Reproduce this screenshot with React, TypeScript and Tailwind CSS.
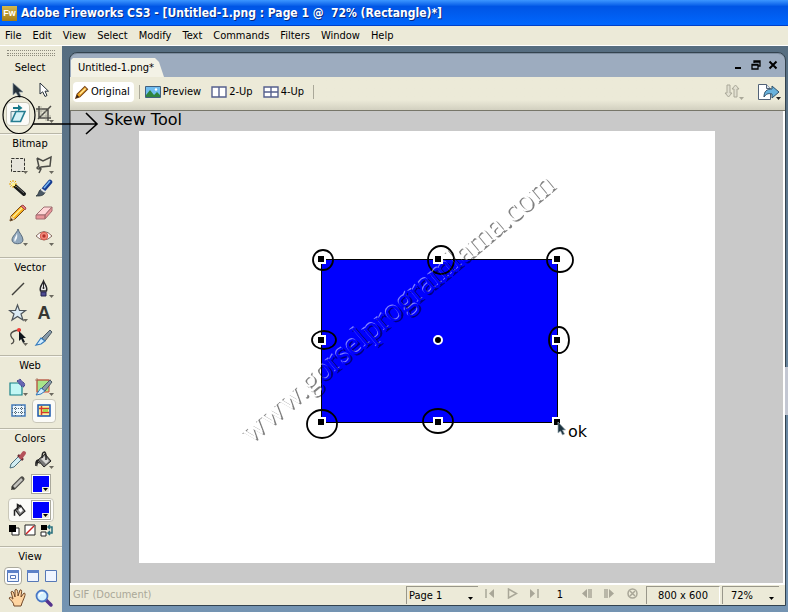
import type { ReactNode } from "react";

const menus = ["File", "Edit", "View", "Select", "Modify", "Text", "Commands", "Filters", "Window", "Help"];

function Icon({ children, size = 20 }: { children: ReactNode; size?: number }) {
  return (
    <svg width={size} height={size} viewBox={`0 0 ${size} ${size}`} fill="none" aria-hidden="true">
      {children}
    </svg>
  );
}

const flyout = <path d="M15 16h5l-2.500 3z" fill="#6b695f" />;

const icons = {
  pointer: (
    <Icon>
      <path d="M5 3v12l3-2.500 3 5 2-1-2-4.500h4z" fill="#25313b" stroke="#8795a0" strokeWidth=".7" />
    </Icon>
  ),
  subselect: (
    <Icon>
      <path d="M6 3v11l2.700-2.200 2.300 4.700 2-1-2-4.300h3.500z" fill="#fff" stroke="#26303a" />
    </Icon>
  ),
  skew: (
    <Icon>
      <path d="M3 7.500h9v10H3z" fill="#e9f3f4" stroke="#6d8993" />
      <path d="M8 7.500h9l-4.500 10H3.500z" fill="#d5f2f7" stroke="#257d91" strokeWidth="1.600" />
      <path d="M5 3h5V.5L14.500 4 10 7V5H5z" fill="#17798a" />
    </Icon>
  ),
  crop: (
    <Icon>
      <path d="M5 2v12h12M2 5h12v12M4 15L17 2" stroke="#4e4d48" strokeWidth="1.500" />
      <path d="M7 2v10h10M2 7h10v10" stroke="#8f8d82" strokeWidth=".6" />
      {flyout}
    </Icon>
  ),
  marquee: (
    <Icon>
      <path d="M3.500 3.500h13v13h-13z" fill="#e7e5db" stroke="#34342f" strokeDasharray="3 1.300" />
      {flyout}
    </Icon>
  ),
  lasso: (
    <Icon>
      <path d="M3 3l6 3 8-4-1 9-9 1-2 2c-3 0-2-3 0-2l2 2-2 4M3 3l2 9" stroke="#4b4b46" strokeWidth="1.500" />
      {flyout}
    </Icon>
  ),
  wand: (
    <Icon>
      <path d="M7 7l9 8" stroke="#17191a" strokeWidth="4" strokeLinecap="round" />
      <path d="M8 7l8 7" stroke="#777" />
      <path d="M5 1v8M1 5h8M2 2l6 6M8 2L2 8" stroke="#e8a000" strokeDasharray="2 1" />
      <path d="M4 4h3v3H4z" fill="#fff38b" />
    </Icon>
  ),
  brush: (
    <Icon>
      <path d="M10 10l6-7" stroke="#173c91" strokeWidth="4.500" strokeLinecap="round" />
      <path d="M10 9l6-7" stroke="#74b6f3" strokeWidth="1.500" />
      <path d="M7 10l4 3c-1 4-5 4-9 4 3-1 2-5 5-7z" fill="#4b5966" stroke="#252e35" strokeWidth=".8" />
      <path d="M7 10l4 3" stroke="#e3e6e6" strokeWidth="2" />
    </Icon>
  ),
  pencil: (
    <Icon>
      <path d="M3 13L13 3l4 3L7 16l-5 2z" fill="#f6b01c" stroke="#784818" />
      <path d="M13 3l2-1 3 3-1 2z" fill="#e57b7c" stroke="#a34848" />
      <path d="M5 14l9-9" stroke="#fff09a" strokeWidth="1.500" />
      <path d="M3 13l4 3-5 2z" fill="#eed1a0" />
      <path d="M3 15l2 2-3 1z" fill="#352516" />
    </Icon>
  ),
  eraser: (
    <Icon>
      <path d="M2 12l8-8h8l-7 8z" fill="#ffd6d7" stroke="#9d7072" />
      <path d="M2 12h9v4H2zM11 12l7-8v4l-7 8z" fill="#e99599" stroke="#a46c70" />
    </Icon>
  ),
  drop: (
    <Icon>
      <path d="M10 2c1 4 5 7 5 11 0 5-11 5-11 0 0-4 5-7 6-11z" fill="#91a8bd" stroke="#596b7d" />
      <path d="M9 6c-1 4-4 6-2 9 1-3 3-3 2-9z" fill="#f4f8fb" />
      {flyout}
    </Icon>
  ),
  eye: (
    <Icon>
      <path d="M2 9q8-9 16 0-8 8-16 0z" fill="#fff" stroke="#876c60" />
      <circle cx="10" cy="9" r="3.800" fill="#f08a7c" stroke="#d8584a" />
      <circle cx="10" cy="9" r="1.700" fill="#b3302a" />
      {flyout}
    </Icon>
  ),
  line: (
    <Icon>
      <path d="M4 16L16 4" stroke="#41403c" strokeWidth="1.500" />
    </Icon>
  ),
  pen: (
    <Icon>
      <path d="M9.500 2C8 6 5 8 6.500 12h6c1.500-4-1.500-6-3-10z" fill="#eee" stroke="#24242a" strokeWidth="1.400" />
      <path d="M9.500 3v6" stroke="#24242a" />
      <circle cx="9.500" cy="9" r="1" fill="#222" />
      <path d="M7 13h5v4H7z" fill="#4e4b92" stroke="#242450" />
      {flyout}
    </Icon>
  ),
  star: (
    <Icon>
      <path d="M9.500 2l2 5.500h6L13 11l2 6-5.500-3.500L4 17l2-6-4.500-3.500h6z" fill="#dcebf4" stroke="#4d545a" strokeWidth="1.200" />
      {flyout}
    </Icon>
  ),
  freeform: (
    <Icon>
      <path d="M3 17c3-1 4-4 1-6-4-5 2-8 9-8" stroke="#4b4a44" strokeWidth="1.300" />
      <circle cx="11" cy="3" r="2" fill="#f33b34" />
      <path d="M11 4v10l2.200-2 1.800 4 2-1-2-4h3z" fill="#10161c" />
      {flyout}
    </Icon>
  ),
  knife: (
    <Icon>
      <path d="M8 11l8-8 2 2-7 9z" fill="#879aa8" stroke="#4c5963" />
      <path d="M7 11l4 3-4 3-5 1z" fill="#d2edff" stroke="#347bbd" strokeWidth="1.200" />
    </Icon>
  ),
  hotspot: (
    <Icon>
      <path d="M2 6h12v12H2z" fill="#c2f7f5" stroke="#168288" strokeWidth="1.200" />
      <path d="M9 4l3-2 5 5-1 3-3-1z" fill="#6866b2" stroke="#292c76" strokeDasharray="1 1" />
      {flyout}
    </Icon>
  ),
  slice: (
    <Icon>
      <path d="M3 3h12v12H3z" fill="#a8e58a" stroke="#d84736" />
      <path d="M3 1v16M1 3h16" stroke="#995e49" strokeWidth=".7" />
      <path d="M8 11l8-8 2 2-7 9z" fill="#879aa8" stroke="#4c5963" />
      <path d="M7 11l4 3-4 3-5 1z" fill="#d2edff" stroke="#347bbd" />
      {flyout}
    </Icon>
  ),
  hide: (
    <Icon>
      <path d="M4 4h13v11H4z" fill="#eef8ff" stroke="#447bb9" strokeWidth="1.500" />
      <path d="M4 7.500h13M4 11.500h13M7.500 4v11M13.500 4v11" stroke="#4e6575" strokeDasharray="1 1" />
    </Icon>
  ),
  show: (
    <Icon>
      <path d="M4 4h12v11H4z" fill="#fff3a0" stroke="#1957ad" strokeWidth="1.500" />
      <path d="M7.500 5v9M5 7.500h10M8 11.500h7" stroke="#d3392b" strokeWidth="1.500" />
      <path d="M9 8h5v3H9z" fill="#a4d84a" />
    </Icon>
  ),
  dropper: (
    <Icon>
      <path d="M3 14L11 6l3 3-8 8-4 1z" fill="#d2edf2" stroke="#4a6e7c" />
      <path d="M10 5l5 5" stroke="#652b32" strokeWidth="2.500" />
      <path d="M13 7l3-4" stroke="#b45159" strokeWidth="4" strokeLinecap="round" />
    </Icon>
  ),
  bucket: (
    <Icon>
      <path d="M4 10l7-6 6 7-7 6z" fill="#777" stroke="#22211f" />
      <path d="M7 9l4-3 4 5-3 3z" fill="#d9d9d5" />
      <path d="M4 10c-3 1-2 4-2 6M8 8c0-8 4-7 4-2v4" stroke="#222" strokeWidth="1.500" />
      <path d="M3 10l4 4-3-1-1 4-1-5z" fill="#222" />
      {flyout}
    </Icon>
  ),
  stroke: (
    <Icon>
      <path d="M6 13l8-8" stroke="#4d4c48" strokeWidth="5" strokeLinecap="round" />
      <path d="M6 13l8-8" stroke="#c4c3bd" strokeWidth="2.500" />
      <path d="M3 16l1-4 3 3z" fill="#353430" />
    </Icon>
  ),
  hand: (
    <Icon>
      <path d="M6 18c0-4-4-6-5-8 2-2 3 1 4 1L3 4c2-2 3 1 4 5V2c2-2 3 1 3 6l2-6c3-1 1 4 1 7l3-4c3 0-1 7-2 10l-1 3z" fill="#ffd5a1" stroke="#714626" />
    </Icon>
  ),
  magnifier: (
    <Icon>
      <path d="M12 12l5 5" stroke="#55338d" strokeWidth="3.500" strokeLinecap="round" />
      <circle cx="8" cy="8" r="5.500" fill="#d6f2ff" stroke="#4978c6" strokeWidth="1.800" />
      <path d="M5 8q1-4 4-3" stroke="#fff" strokeWidth="1.500" />
    </Icon>
  ),
};

function Tool({ label, active = false, children }: { label: string; active?: boolean; children: ReactNode }) {
  return (
    <button
      type="button"
      aria-label={label}
      className={
        active
          ? "flex h-6 w-6 items-center justify-center rounded-sm border border-[#c9c7b9] bg-[#fbfbf8]"
          : "flex h-6 w-6 items-center justify-center"
      }
    >
      {children}
    </button>
  );
}

function Section({ title, children }: { title: string; children: ReactNode }) {
  return (
    <section className="border-t border-[#b9b7a8] shadow-[inset_0_1px_0_#f8f7ef]">
      <h2 className="flex h-[19px] items-center justify-center pr-0.5">{title}</h2>
      <div className="px-1.5">{children}</div>
    </section>
  );
}

function Swatch({ label }: { label: string }) {
  return (
    <button type="button" aria-label={label} className="flex h-[18px] w-[18px] items-end justify-end border border-white bg-[#0000fe] shadow-[0_0_0_1px_#aaa99c]">
      <svg width="7" height="5" aria-hidden="true">
        <path d="M0 0h7v5H0z" fill="#ecead8" />
        <path d="M1 1h5L3.500 4z" fill="#000" />
      </svg>
    </button>
  );
}

function ViewMode({ kind }: { kind: number }) {
  return (
    <svg width="14" height="14" viewBox="0 0 14 14" fill="none" aria-hidden="true">
      <path d="M1.500 1.500h11v11h-11z" fill="#f0f5ff" stroke="#5678b6" />
      {kind < 2 && <path d="M1 1h12v3H1z" fill="#5e82c8" />}
      {kind === 0 && <path d="M4.500 6.500h5v3h-5z" fill="#fff" stroke="#5576b8" />}
    </svg>
  );
}

function Toolbox() {
  return (
    <aside className="w-[62px] shrink-0 bg-[#ecead8]">
      <div className="mx-[7px] mt-1 flex h-1.5 flex-col justify-between">
        <div className="border-t border-dotted border-[#8d8b7e]" />
        <div className="border-t border-dotted border-[#8d8b7e]" />
        <div className="border-t border-dotted border-[#8d8b7e]" />
      </div>
      <h2 className="flex h-5 items-center justify-center pt-1 pr-0.5">Select</h2>
      <div className="grid grid-cols-[26px_26px] px-1.5 pt-0.5 pb-[7px]">
        <Tool label="Pointer">{icons.pointer}</Tool>
        <Tool label="Subselection">{icons.subselect}</Tool>
        <Tool label="Skew" active>{icons.skew}</Tool>
        <Tool label="Crop">{icons.crop}</Tool>
      </div>
      <Section title="Bitmap">
        <div className="grid grid-cols-[26px_26px] pb-2">
          <Tool label="Marquee">{icons.marquee}</Tool>
          <Tool label="Lasso">{icons.lasso}</Tool>
          <Tool label="Magic Wand">{icons.wand}</Tool>
          <Tool label="Brush">{icons.brush}</Tool>
          <Tool label="Pencil">{icons.pencil}</Tool>
          <Tool label="Eraser">{icons.eraser}</Tool>
          <Tool label="Blur">{icons.drop}</Tool>
          <Tool label="Red Eye Removal">{icons.eye}</Tool>
        </div>
      </Section>
      <Section title="Vector">
        <div className="grid grid-cols-[26px_26px] pb-1.5">
          <Tool label="Line">{icons.line}</Tool>
          <Tool label="Pen">{icons.pen}</Tool>
          <Tool label="Star">{icons.star}</Tool>
          <Tool label="Text">
            <span className="font-['Liberation_Sans',sans-serif] text-lg leading-5 font-bold text-[#373632]">A</span>
          </Tool>
          <Tool label="Freeform">{icons.freeform}</Tool>
          <Tool label="Knife">{icons.knife}</Tool>
        </div>
      </Section>
      <Section title="Web">
        <div className="grid grid-cols-[26px_26px] pb-[5px]">
          <Tool label="Rectangle Hotspot">{icons.hotspot}</Tool>
          <Tool label="Slice">{icons.slice}</Tool>
          <Tool label="Hide slices">{icons.hide}</Tool>
          <Tool label="Show slices" active>{icons.show}</Tool>
        </div>
      </Section>
      <Section title="Colors">
        <div className="grid grid-cols-[26px_26px]">
          <Tool label="Eyedropper">{icons.dropper}</Tool>
          <Tool label="Paint Bucket">{icons.bucket}</Tool>
          <Tool label="Stroke">{icons.stroke}</Tool>
          <div className="flex items-center"><Swatch label="Stroke color" /></div>
        </div>
        <div className="mx-0.5 mt-0.5 grid h-6 grid-cols-[23px_25px] items-center rounded border border-[#c9c7b9] bg-[#fbfbf8]">
          <svg className="ml-1" width="15" height="15" viewBox="0 0 20 20" aria-hidden="true">
            <path d="M3 9l7-6 6 8-7 6z" fill="#888" stroke="#222" strokeWidth="1.500" />
            <path d="M7 9l4-3 2 4-3 3z" fill="#fff" />
            <path d="M6 9V2l5 3M2 9v8" fill="none" stroke="#222" strokeWidth="2" />
          </svg>
          <Swatch label="Fill color" />
        </div>
        <div className="flex h-6 items-start justify-between px-0.5 pt-0.5">
          <button type="button" aria-label="Default colors">
            <svg width="12" height="12"><path d="M4 4h7v7H4z" fill="#fff" stroke="#222" /><path d="M1 1h7v7H1z" /></svg>
          </button>
          <button type="button" aria-label="No color">
            <svg width="12" height="12"><path d="M1 1h10v10H1z" fill="#fff" stroke="#222" /><path d="M2 10l8-8" stroke="#c22" strokeWidth="1.500" /></svg>
          </button>
          <button type="button" aria-label="Swap colors">
            <svg width="14" height="13"><path d="M1 1h6v5H1z" /><path d="M1 8h5v4H1z" fill="#fff" stroke="#222" /><path d="M8 3h4v6H8M10 1L8 3l2 2M10 7L8 9l2 2" fill="none" stroke="#246d7c" strokeWidth="1.500" /></svg>
          </button>
        </div>
      </Section>
      <Section title="View">
        <div className="-mx-0.5 flex h-5 items-center justify-between">
          <button type="button" aria-label="Standard screen" className="rounded-sm border border-[#aaa99c] bg-white p-px"><ViewMode kind={0} /></button>
          <button type="button" aria-label="Full screen with menus"><ViewMode kind={1} /></button>
          <button type="button" aria-label="Full screen"><ViewMode kind={2} /></button>
        </div>
        <div className="grid grid-cols-[26px_26px]">
          <Tool label="Hand">{icons.hand}</Tool>
          <Tool label="Zoom">{icons.magnifier}</Tool>
        </div>
      </Section>
    </aside>
  );
}

const handles = [
  [182, 128], [299, 128], [418, 128],
  [182, 209], [418, 209],
  [182, 291], [299, 291], [418, 291],
];

const rings = [
  [184, 129, 10, 10], [302, 129, 13, 14], [421, 129, 13, 12],
  [185, 209, 12, 9], [420, 209, 10, 13],
  [183, 293, 15, 14], [299, 290, 15, 12],
];

function Page() {
  return (
    <svg width="576" height="432" viewBox="0 0 576 432" className="shrink-0 bg-white" role="img" aria-label="Selected rectangle">
      <defs>
        <filter id="emboss" x="-10%" y="-50%" width="120%" height="200%" colorInterpolationFilters="sRGB">
          <feOffset in="SourceAlpha" dx="-1" dy="-1" result="up" />
          <feComposite in="up" in2="SourceAlpha" operator="out" result="upEdge" />
          <feFlood floodColor="#fff" floodOpacity=".5" />
          <feComposite in2="upEdge" operator="in" result="light" />
          <feOffset in="SourceAlpha" dx="2" dy="1" result="down" />
          <feComposite in="down" in2="SourceAlpha" operator="out" result="downEdge" />
          <feFlood floodColor="#000" floodOpacity=".5" />
          <feComposite in2="downEdge" operator="in" result="dark" />
          <feMerge><feMergeNode in="light" /><feMergeNode in="dark" /></feMerge>
        </filter>
      </defs>
      <rect x="182.500" y="128.500" width="236" height="163" fill="#0000fe" stroke="#000" />
      {rings.map(([x, y, rx, ry]) => (
        <ellipse key={`${x}-${y}`} cx={x} cy={y} rx={rx} ry={ry} fill="none" stroke="#000" strokeWidth="1.800" />
      ))}
      <g filter="url(#emboss)">
        <text transform="translate(111 313) rotate(-40)" className="font-['Liberation_Serif',serif] text-[33px]">
          www.gorselprogramlama.com
        </text>
      </g>
      {handles.map(([x, y]) => (
        <rect key={`${x}-${y}`} x={x - 4} y={y - 4} width="8" height="8" fill="#000" stroke="#fff" strokeWidth="2" />
      ))}
      <circle cx="299" cy="209" r="4" fill="#000" stroke="#fff" strokeWidth="2" />
      <path d="M419 291v11l2.500-2 2 4 2-1-2-4h3z" fill="#1d3440" stroke="#9aa9b1" strokeWidth=".7" />
      <text x="429" y="306" className="font-['DejaVu_Sans',sans-serif] text-base">ok</text>
    </svg>
  );
}

function DocumentToolbar() {
  return (
    <div className="flex h-[34px] shrink-0 items-center border-b border-[#777669] bg-linear-to-b from-[#ecead8] from-70% to-[#d2d0c0] pr-1 pb-[3px] pl-[3px]">
      <button type="button" className="flex h-5 items-center gap-0.5 rounded-sm bg-white pr-1 pl-0.5">
        <svg width="14" height="14" viewBox="0 0 20 20" aria-hidden="true">
          <path d="M3 13L14 2l4 4L7 17l-6 2z" fill="#f3a51b" stroke="#76451c" strokeWidth="1.500" />
          <path d="M3 14l3 3-5 2z" fill="#302116" />
          <path d="M7 13l8-8" stroke="#ffe89c" strokeWidth="2" />
        </svg>
        Original
      </button>
      <span className="mx-[5px] h-3.5 border-l border-[#aaa899]" />
      <button type="button" className="flex items-center gap-0.5">
        <svg width="16" height="12" viewBox="0 0 16 12" aria-hidden="true">
          <path d="M.5.5h15v11H.5z" fill="#70bdf0" stroke="#406080" />
          <path d="M1 9l4-5 4 5 3-3 3 3v2H1z" fill="#2f843f" />
          <circle cx="11" cy="3.500" r="1.200" fill="#fff" />
        </svg>
        Preview
      </button>
      <button type="button" className="ml-2.5 flex items-center gap-0.5">
        <svg width="16" height="12" aria-hidden="true"><path d="M1 1h14v10H1zM8 1v10" fill="#fff" stroke="#56608d" strokeWidth="1.400" /></svg>
        2-Up
      </button>
      <button type="button" className="ml-2.5 flex items-center gap-0.5">
        <svg width="16" height="12" aria-hidden="true"><path d="M1 1h14v10H1zM8 1v10M1 6h14" fill="#fff" stroke="#56608d" strokeWidth="1.400" /></svg>
        4-Up
      </button>
      <span className="ml-[9px] h-3.5 border-l border-[#aaa899]" />
      <button type="button" aria-label="File management" className="ml-auto">
        <svg width="22" height="18" viewBox="0 0 22 18" aria-hidden="true">
          <path d="M4 2h3v8h2l-3.500 4L2 10h2zM11 14V6H9l3.500-4L16 6h-2v8z" fill="#e2e0d1" stroke="#aaa899" />
          <path d="M16 14h5l-2.500 3z" fill="#aaa899" />
        </svg>
      </button>
      <button type="button" aria-label="Quick export" className="ml-3">
        <svg width="24" height="18" viewBox="0 0 24 18" aria-hidden="true">
          <path d="M1.500 1.500h8l4 4v11h-12z" fill="#fff" stroke="#526277" />
          <path d="M9.500 1.500v4h4" fill="#d9e3ec" stroke="#526277" />
          <path d="M7 14c0-6 3-8 8-8V3l7 6-7 6v-4c-4-1-6 0-8 3z" fill="#69b2dc" stroke="#31526b" />
          <path d="M19 14h5l-2.500 3z" fill="#222" />
        </svg>
      </button>
    </div>
  );
}

function Picker({ label, value, wide = false }: { label: string; value: string; wide?: boolean }) {
  return (
    <label
      className={
        wide
          ? "relative flex h-[18px] w-[72px] border-t border-l border-[#99978a]"
          : "relative ml-0.5 flex h-[18px] w-[57px] border-t border-l border-[#99978a]"
      }
    >
      <select
        aria-label={label}
        className={
          wide
            ? "h-[17px] w-full appearance-none bg-transparent pl-0.5 leading-[17px]"
            : "h-[17px] w-full appearance-none bg-transparent pl-2 leading-[17px]"
        }
      >
        <option>{value}</option>
      </select>
      <svg className="pointer-events-none absolute right-[5px] bottom-1" width="5" height="3" aria-hidden="true">
        <path d="M0 0h5L2.500 3z" />
      </svg>
    </label>
  );
}

const playback: [string, string, string][] = [
  ["First frame", "M1 1v9", "M9 1v9L4 5.500z"],
  ["Play", "M1.500 1v9l8-4.500z", ""],
  ["Last frame", "M9 1v9", "M1 1v9l5-4.500z"],
];

const stepping: [string, string, string][] = [
  ["Previous frame", "M8 1v9M10 1v9", "M6 1v9L1 5.500z"],
  ["Next frame", "M1 1v9M3 1v9", "M5 1v9l5-4.500z"],
];

function FrameButton({ item }: { item: [string, string, string] }) {
  return (
    <button type="button" aria-label={item[0]}>
      <svg width="11" height="11" aria-hidden="true">
        <path d={item[1]} fill="none" stroke="#a9a798" strokeWidth="1.500" />
        <path d={item[2]} fill="#a9a798" />
      </svg>
    </button>
  );
}

function StatusBar() {
  return (
    <footer className="flex h-[22px] shrink-0 items-center border-t-2 border-white bg-[#ecead8] pr-1.5 pl-[3px]">
      <span className="mr-auto text-[#aaa899]">GIF (Document)</span>
      <Picker label="Page" value="Page 1" wide />
      <div className="flex items-center gap-[11px] px-[7px] pb-1">
        {playback.map((item) => <FrameButton key={item[0]} item={item} />)}
      </div>
      <span className="w-[26px] text-center">1</span>
      <div className="flex items-center gap-3 px-2 pb-1">
        {stepping.map((item) => <FrameButton key={item[0]} item={item} />)}
        <button type="button" aria-label="Stop">
          <svg width="11" height="11" aria-hidden="true">
            <circle cx="5.500" cy="5.500" r="4.500" fill="none" stroke="#a9a798" strokeWidth="1.500" />
            <path d="M3 3l5 5M8 3L3 8" stroke="#a9a798" strokeWidth="1.500" />
          </svg>
        </button>
      </div>
      <span className="flex h-[18px] w-[74px] items-center justify-center border-t border-r border-l border-[#99978a] border-r-white">800 x 600</span>
      <Picker label="Magnification" value="72%" />
    </footer>
  );
}

function DocumentWindow() {
  return (
    <main className="mt-1.5 mr-0.5 mb-1.5 ml-[7px] flex min-w-0 flex-1 flex-col overflow-hidden rounded-t-lg border border-[#33434f] bg-[#9dacbf] shadow-[inset_0_1px_0_#7d8d9f]">
      <div className="flex h-6 shrink-0 items-end justify-between pl-px">
        <div className="flex h-[19px] w-[93px] items-center bg-[#f3f2e6] pl-[7px] [clip-path:polygon(0_2px,2px_0,84px_0,88px_4px,100%_100%,0_100%)]">
          Untitled-1.png*
        </div>
        <div className="flex items-center gap-[7px] self-center pr-[7px]">
          <button type="button" aria-label="Minimize"><svg width="10" height="10"><path d="M1 8h6" stroke="#000" strokeWidth="2" /></svg></button>
          <button type="button" aria-label="Restore"><svg width="10" height="10"><path d="M3 3V1h6v5H7M3 2h6M1 4.500h6V9H1zM1 5h6" fill="none" stroke="#000" strokeWidth="1.300" /></svg></button>
          <button type="button" aria-label="Close document"><svg width="10" height="10"><path d="M1.500 1.500l7 7m0-7l-7 7" stroke="#000" strokeWidth="2" /></svg></button>
        </div>
      </div>
      <DocumentToolbar />
      <div className="flex min-h-0 flex-1 items-center justify-center overflow-hidden border-r-2 border-l border-r-white border-l-[#777] bg-[#c9c9c9]">
        <Page />
      </div>
      <StatusBar />
    </main>
  );
}

export default function App() {
  return (
    <div className="relative flex h-screen flex-col overflow-hidden bg-white pr-px pb-px font-['DejaVu_Sans_Condensed','DejaVu_Sans',sans-serif] text-[11px] leading-[14px] text-black">
      <header className="flex h-[26px] shrink-0 items-center gap-1 bg-linear-to-b from-[#3c96ff] via-[#0055e5] via-25% to-[#0168ff] pl-0.5 shadow-[inset_0_-1px_0_#0040c8]">
        <span className="flex h-[15px] w-[15px] items-center justify-center bg-linear-to-b from-[#d4b84c] to-[#a57d12] font-['Liberation_Sans',sans-serif] text-[9px] font-bold text-white">Fw</span>
        <h1 className="text-xs font-bold whitespace-pre text-white [text-shadow:1px_1px_0_#0a2a80]">
          Adobe Fireworks CS3 - [Untitled-1.png : Page 1 @  72% (Rectangle)*]
        </h1>
      </header>
      <nav className="flex h-5 shrink-0 items-center gap-[11px] border-b border-white bg-[#ecead8] pl-[5px]">
        {menus.map((menu) => <button type="button" key={menu}>{menu}</button>)}
      </nav>
      <div className="relative flex min-h-0 flex-1 bg-linear-to-b from-[#566d80] to-[#7494b2]">
        <Toolbox />
        <DocumentWindow />
        <button type="button" aria-label="Expand panels" className="absolute top-[321px] right-0 h-12 w-[3px] bg-[#c3c7d2]" />
        <svg className="pointer-events-none absolute top-12 left-0" width="200" height="44" fill="none" stroke="#000" aria-hidden="true">
          <ellipse cx="19" cy="21" rx="16" ry="18.500" strokeWidth="1.200" />
          <path d="M33 30h64M86 19l11 11-11 10" strokeWidth="1.600" />
        </svg>
        <p className="absolute top-16 left-[104px] font-['DejaVu_Sans',sans-serif] text-base leading-5">Skew Tool</p>
      </div>
    </div>
  );
}
